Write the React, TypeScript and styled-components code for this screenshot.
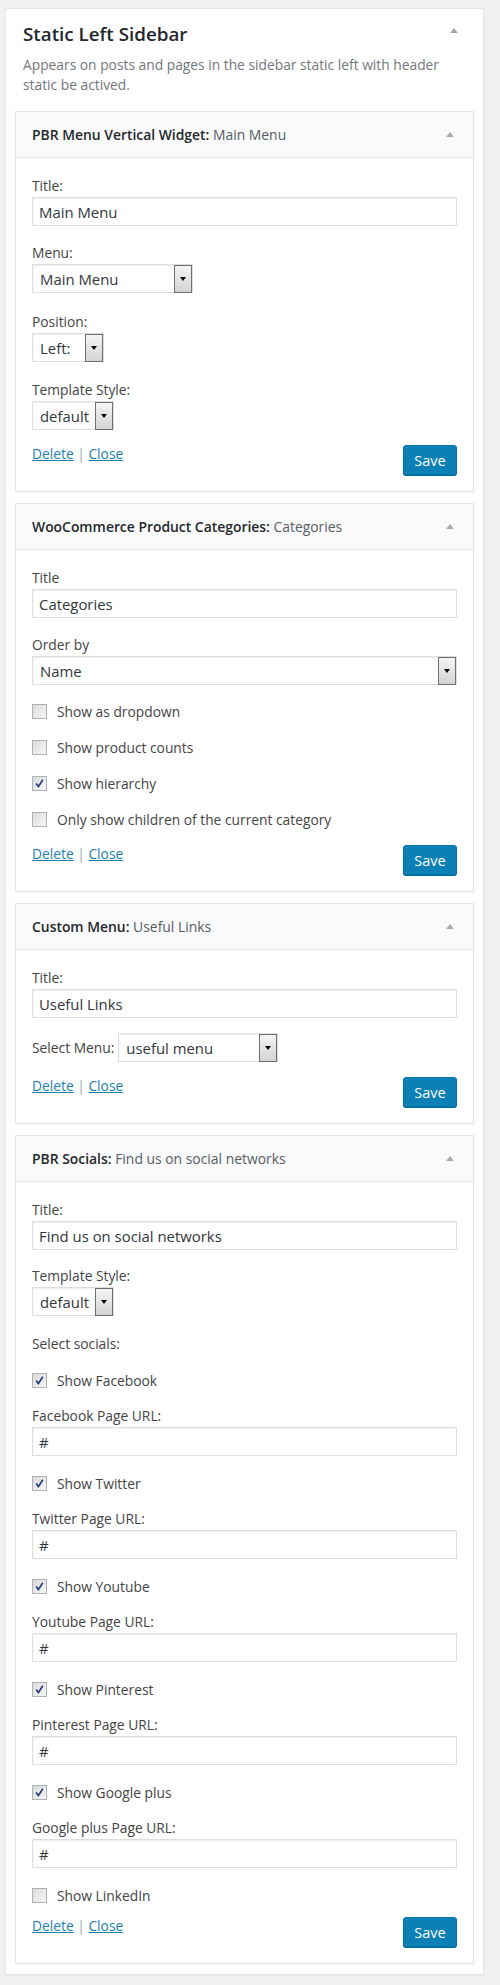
import React from "react";
import styled, { createGlobalStyle } from "styled-components";

const GlobalStyle = createGlobalStyle`
  body {
    margin: 0;
    background: #f1f1f1;
    font-family: "Open Sans", "Noto Sans", sans-serif;
    color: #444;
  }
`;

const Page = styled.div`
  padding: 8px 16px 8px 5px;
`;

const SidebarCard = styled.div`
  background: #fff;
  border: 1px solid #e5e5e5;
  box-shadow: 0 1px 1px rgba(0, 0, 0, 0.04);
  padding: 0 9px 10px;
`;

const SidebarHead = styled.div`
  display: flex;
  justify-content: space-between;
  align-items: flex-start;
  padding: 13px 16px 0 8px;
`;

const SidebarTitle = styled.h2`
  margin: 0;
  font-size: 18.8px;
  line-height: 24px;
  font-weight: 600;
  color: #23282d;
`;

const Arrow = styled.span<{ $top: number }>`
  display: block;
  width: 0;
  height: 0;
  margin-top: ${(p) => p.$top}px;
  border-left: 4px solid transparent;
  border-right: 4px solid transparent;
  border-bottom: 5px solid #a7aaad;
`;

const Description = styled.p`
  margin: 9px 8px 0;
  padding-right: 10px;
  font-size: 13.8px;
  line-height: 20px;
  color: #72777c;
`;

const WidgetList = styled.div`
  margin-top: 16px;
`;

const Widget = styled.div<{ $mt: number }>`
  margin-top: ${(p) => p.$mt}px;
  border: 1px solid #e5e5e5;
  background: #fff;
  box-shadow: 0 1px 1px rgba(0, 0, 0, 0.04);
`;

const WidgetHeader = styled.div`
  height: 45px;
  display: flex;
  align-items: center;
  justify-content: space-between;
  padding: 0 19px 0 16px;
  background: #fafafa;
  border-bottom: 1px solid #e5e5e5;
  font-size: 13.9px;
`;

const WidgetName = styled.span`
  font-weight: 600;
  color: #23282d;
`;

const InTitle = styled.span`
  font-weight: 400;
  color: #555d66;
`;

const WidgetBody = styled.div`
  padding: 18px 16px 16px;
`;

const Field = styled.div<{ $mt?: number }>`
  margin-top: ${(p) => p.$mt ?? 0}px;
`;

const Label = styled.div`
  font-size: 13.8px;
  line-height: 20px;
  color: #444;
  white-space: nowrap;
`;

const TextInput = styled.div`
  margin-top: 1px;
  height: 29px;
  box-sizing: border-box;
  border: 1px solid #ddd;
  box-shadow: inset 0 1px 2px rgba(0, 0, 0, 0.07);
  padding: 0 6px;
  display: flex;
  align-items: center;
  font-size: 14.9px;
  color: #32373c;
`;

const SelectBox = styled.div<{ $w?: number }>`
  margin-top: 1px;
  height: 29px;
  width: ${(p) => (p.$w ? `${p.$w}px` : "100%")};
  box-sizing: border-box;
  border: 1px solid #ddd;
  box-shadow: inset 0 1px 2px rgba(0, 0, 0, 0.07);
  display: flex;
  align-items: center;
  background: #fff;
`;

const SelectText = styled.span`
  flex: 1;
  padding-left: 7px;
  font-size: 14.9px;
  color: #32373c;
  white-space: nowrap;
`;

const SelectButton = styled.span`
  width: 18px;
  height: 28px;
  margin-top: 1px;
  box-sizing: border-box;
  border: 1px solid #6f6f6f;
  background: linear-gradient(#f4f4f4, #d4d4d4);
  display: flex;
  align-items: center;
  justify-content: center;

  &::after {
    content: "";
    border-left: 3px solid transparent;
    border-right: 3px solid transparent;
    border-top: 4px solid #000;
  }
`;

const InlineRow = styled.div<{ $mt: number }>`
  margin-top: ${(p) => p.$mt}px;
  display: flex;
  align-items: center;
  gap: 4px;

  & > ${SelectBox} {
    margin-top: 0;
  }
`;

const CheckRow = styled.label<{ $mt: number }>`
  margin-top: ${(p) => p.$mt}px;
  display: flex;
  align-items: center;
  gap: 10px;
  height: 20px;
  font-size: 13.8px;
  color: #444;
`;

const CheckBox = styled.span`
  width: 15px;
  height: 15px;
  box-sizing: border-box;
  border: 1px solid #aeb2b6;
  background: linear-gradient(135deg, #dadada, #f7f7f7);
  display: flex;
  align-items: center;
  justify-content: center;
`;

const Actions = styled.div<{ $mt: number }>`
  margin-top: ${(p) => p.$mt}px;
  display: flex;
  justify-content: space-between;
  align-items: flex-start;
`;

const Links = styled.div`
  font-size: 13.8px;
  line-height: 20px;
  color: #a0a5aa;

  a {
    color: #1e7fb0;
    text-decoration: underline;
  }
`;

const SaveButton = styled.button`
  margin-top: 1px;
  height: 30px;
  width: 54px;
  padding: 0;
  border: 1px solid #0073aa;
  border-radius: 3px;
  background: #0a80b5;
  box-shadow: 0 1px 0 #006799;
  color: #fff;
  font-family: "Open Sans", sans-serif;
  font-size: 14.5px;
`;

const Select = ({ value, width }: { value: string; width?: number }) => (
  <SelectBox $w={width}>
    <SelectText>{value}</SelectText>
    <SelectButton />
  </SelectBox>
);

const Check = ({ label, checked, mt }: { label: string; checked?: boolean; mt: number }) => (
  <CheckRow $mt={mt}>
    <CheckBox>
      {checked && (
        <svg width="11" height="11" viewBox="0 0 11 11">
          <path d="M2.2 5.5 L4.4 8.6 L8.8 1.8" fill="none" stroke="#233c7a" strokeWidth="1.7" />
        </svg>
      )}
    </CheckBox>
    {label}
  </CheckRow>
);

const WidgetActions = ({ mt }: { mt: number }) => (
  <Actions $mt={mt}>
    <Links>
      <a>Delete</a> | <a>Close</a>
    </Links>
    <SaveButton>Save</SaveButton>
  </Actions>
);

const WidgetTop = ({ name, title }: { name: string; title: string }) => (
  <WidgetHeader>
    <span>
      <WidgetName>{name}:</WidgetName> <InTitle>{title}</InTitle>
    </span>
    <Arrow $top={0} />
  </WidgetHeader>
);

const socials = ["Facebook", "Twitter", "Youtube", "Pinterest", "Google plus"];

export default function App() {
  return (
    <Page>
      <GlobalStyle />
      <SidebarCard>
        <SidebarHead>
          <SidebarTitle>Static Left Sidebar</SidebarTitle>
          <Arrow $top={6} />
        </SidebarHead>
        <Description>
          Appears on posts and pages in the sidebar static left with header static be actived.
        </Description>

        <WidgetList>
          <Widget $mt={0}>
            <WidgetTop name="PBR Menu Vertical Widget" title="Main Menu" />
            <WidgetBody>
              <Field>
                <Label>Title:</Label>
                <TextInput>Main Menu</TextInput>
              </Field>
              <Field $mt={17}>
                <Label>Menu:</Label>
                <Select value="Main Menu" width={161} />
              </Field>
              <Field $mt={19}>
                <Label>Position:</Label>
                <Select value="Left:" width={72} />
              </Field>
              <Field $mt={18}>
                <Label>Template Style:</Label>
                <Select value="default" width={82} />
              </Field>
              <WidgetActions mt={14} />
            </WidgetBody>
          </Widget>

          <Widget $mt={11}>
            <WidgetTop name="WooCommerce Product Categories" title="Categories" />
            <WidgetBody>
              <Field>
                <Label>Title</Label>
                <TextInput>Categories</TextInput>
              </Field>
              <Field $mt={17}>
                <Label>Order by</Label>
                <Select value="Name" />
              </Field>
              <Check mt={16} label="Show as dropdown" />
              <Check mt={16} label="Show product counts" />
              <Check mt={16} label="Show hierarchy" checked />
              <Check mt={16} label="Only show children of the current category" />
              <WidgetActions mt={15} />
            </WidgetBody>
          </Widget>

          <Widget $mt={11}>
            <WidgetTop name="Custom Menu" title="Useful Links" />
            <WidgetBody>
              <Field>
                <Label>Title:</Label>
                <TextInput>Useful Links</TextInput>
              </Field>
              <InlineRow $mt={15}>
                <Label>Select Menu:</Label>
                <Select value="useful menu" width={160} />
              </InlineRow>
              <WidgetActions mt={14} />
            </WidgetBody>
          </Widget>

          <Widget $mt={11}>
            <WidgetTop name="PBR Socials" title="Find us on social networks" />
            <WidgetBody>
              <Field>
                <Label>Title:</Label>
                <TextInput>Find us on social networks</TextInput>
              </Field>
              <Field $mt={16}>
                <Label>Template Style:</Label>
                <Select value="default" width={82} />
              </Field>
              <Field $mt={18}>
                <Label>Select socials:</Label>
              </Field>
              {socials.map((s, i) => (
                <React.Fragment key={s}>
                  <Check mt={i === 0 ? 16 : 17} label={`Show ${s}`} checked />
                  <Field $mt={16}>
                    <Label>{s} Page URL:</Label>
                    <TextInput>#</TextInput>
                  </Field>
                </React.Fragment>
              ))}
              <Check mt={17} label="Show LinkedIn" />
              <WidgetActions mt={11} />
            </WidgetBody>
          </Widget>
        </WidgetList>
      </SidebarCard>
    </Page>
  );
}
